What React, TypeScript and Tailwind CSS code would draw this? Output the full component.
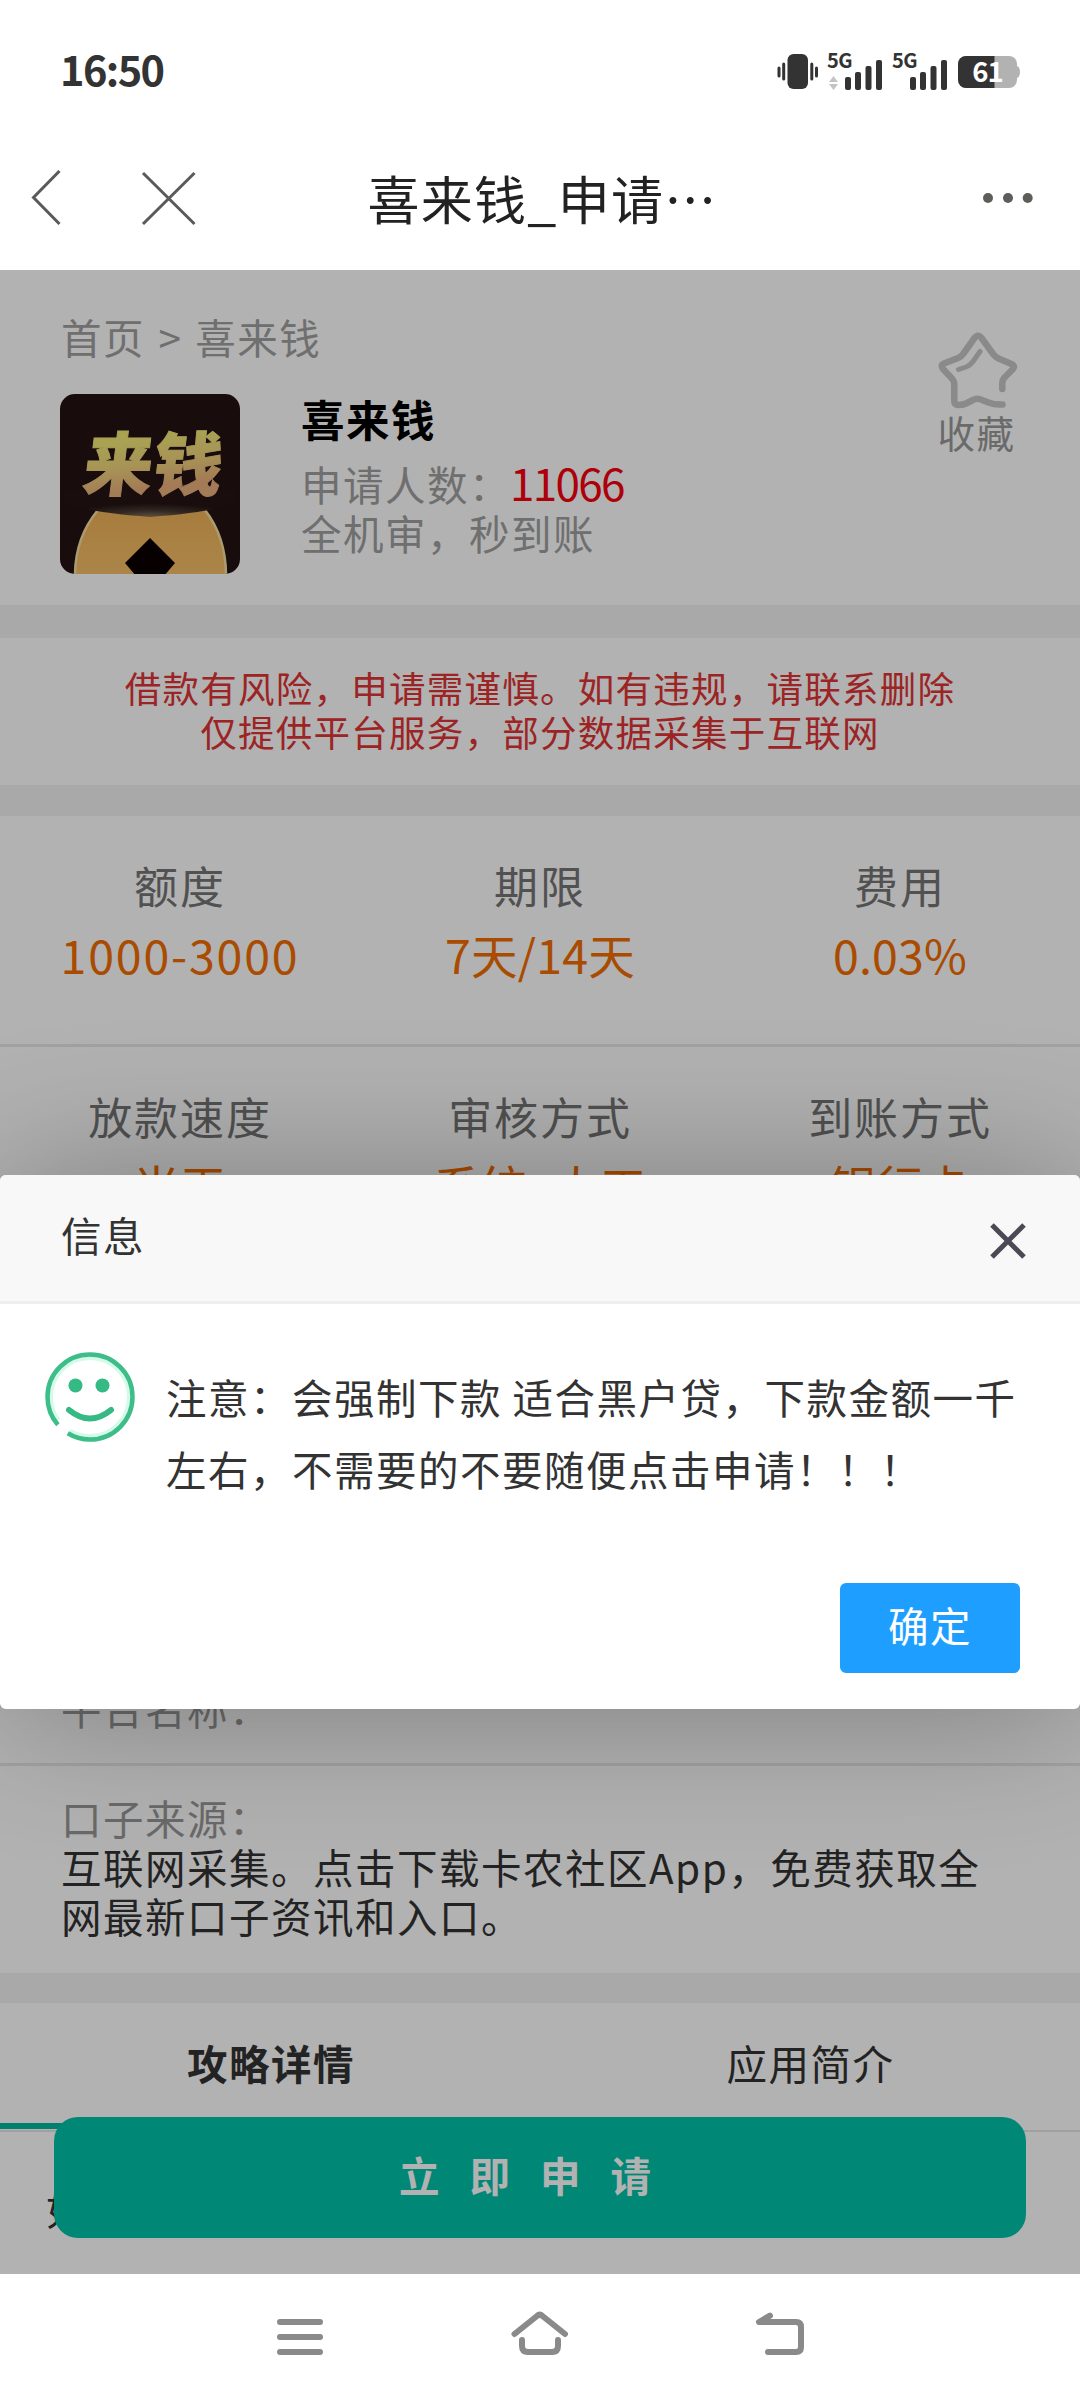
import { ReactNode } from "react";

type Stat = {
  label: string;
  value: string;
};

const LIMIT_STATS: Stat[] = [
  { label: "额度", value: "1000-3000" },
  { label: "期限", value: "7天/14天" },
  { label: "费用", value: "0.03%" },
];

const SPEED_STATS: Stat[] = [
  { label: "放款速度", value: "当天" },
  { label: "审核方式", value: "系统+人工" },
  { label: "到账方式", value: "银行卡" },
];

export default function App() {
  return (
    <div className="flex h-[2400px] w-[1080px] flex-col overflow-hidden bg-white font-['Noto_Sans_CJK_SC',sans-serif] text-[40.5px] tracking-[1.5px] text-[#333]">
      <StatusBar />
      <TitleBar />
      <main className="relative h-[2004px] overflow-hidden bg-white">
        <ProductHeader />
        <Gap className="h-[33px]" />
        <div className="flex h-[147px] flex-col items-center pt-[28px] text-center text-[36.5px] leading-[44px] tracking-[1.25px] text-[#e03434]">
          <p>借款有风险，申请需谨慎。如有违规，请联系删除</p>
          <p>仅提供平台服务，部分数据采集于互联网</p>
        </div>
        <Gap className="h-[31px]" />
        <StatRow stats={LIMIT_STATS} />
        <div className="h-[3px] bg-[#e8e8e8]" />
        <StatRow stats={SPEED_STATS} />
        <Gap className="h-[31px]" />
        <SourceInfo />
        <Gap className="h-[30px]" />
        <Tabs />
        <p className="pl-[46px] pt-[49px] leading-[54px]">如</p>
        <button className="absolute bottom-[36px] left-[54px] flex h-[121px] w-[972px] items-center justify-center rounded-[24px] bg-[#00c2aa] pb-[5px] font-bold tracking-[30px] text-white">
          立即申请
        </button>
        {/* mask */}
        <div className="absolute inset-0 bg-black/30" />
        <Dialog />
      </main>
      <NavBar />
    </div>
  );
}

const Gap = ({ className }: { className: string }) => (
  <div className={`bg-[#f2f2f2] ${className}`} />
);

const SignalBars = () => (
  <svg width="37" height="30" viewBox="0 0 37 30" fill="#333">
    <rect x="0" y="17" width="6" height="13" rx="2" />
    <rect x="10" y="12" width="6" height="18" rx="2" />
    <rect x="20.500" y="6" width="6" height="24" rx="2" />
    <rect x="31" y="0" width="6" height="30" rx="2" />
  </svg>
);

const StatusBar = () => (
  <header className="flex h-[126px] items-start justify-between pl-[60px] pr-[60px] pt-[51px]">
    <span className="text-[41.5px] font-bold leading-[35px] tracking-[-1.6px]">
      16:50
    </span>
    <div className="flex items-start">
      {/* vibrate */}
      <svg width="42" height="36" viewBox="0 0 42 36" className="mt-[3px]">
        <rect x="11.500" y="0" width="20.500" height="35" rx="6" fill="#333" />
        <path
          d="M3 14v8M7.700 10v15M35.800 10v15M40.500 14v8"
          stroke="#333"
          strokeWidth="3"
          strokeLinecap="round"
        />
      </svg>
      <Signal>
        <svg width="9" height="14" viewBox="0 0 9 14" fill="#c4c4c4">
          <path d="M4.500 0L9 6H0zM4.500 14L0 8h9z" />
        </svg>
      </Signal>
      <Signal />
      <svg width="62" height="32" viewBox="0 0 62 32" className="ml-[10px] mt-[5px] overflow-visible">
        <path d="M59 10q3 1 3 6t-3 6z" fill="#b2b2b2" />
        <rect width="59" height="32" rx="8" fill="#b2b2b2" />
        <path d="M8 0h28.500v32H8a8 8 0 0 1-8-8V8a8 8 0 0 1 8-8z" fill="#333" />
        <text
          x="29.500"
          y="26"
          textAnchor="middle"
          fontSize="27.500"
          fontWeight="bold"
          letterSpacing="-1"
          fill="#fff"
        >
          61
        </text>
      </svg>
    </div>
  </header>
);

const Signal = ({ children }: { children?: ReactNode }) => (
  <div className="relative ml-[10px] h-[42px] w-[55px]">
    <span className="ml-[-1px] block text-[20px] font-bold leading-[17px] tracking-[-0.5px]">
      5G
    </span>
    <div className="absolute left-[1px] top-[25px]">{children}</div>
    <div className="absolute left-[17px] top-[9px]">
      <SignalBars />
    </div>
  </div>
);

const TitleBar = () => (
  <div className="flex h-[144px] items-start justify-between pl-[31px] pr-[47px]">
    <div className="flex pt-[44px]">
      <svg width="170" height="56" viewBox="0 0 170 56" fill="none" stroke="#5a5a5a" strokeWidth="3">
        <path d="M28.500 1L2.500 27.500L28.500 54" />
        <path d="M112 3L163.500 54M163.500 3L112 54" />
      </svg>
    </div>
    <h1 className="mr-[99px] mt-[36px] text-[52px] leading-[72px] tracking-[1.3px] text-[#222]">
      喜来钱_申请…
    </h1>
    <svg width="50" height="12" viewBox="0 0 50 12" fill="#5d5d5a" className="mt-[66px]">
      <circle cx="5" cy="6" r="5" />
      <circle cx="25" cy="6" r="5" />
      <circle cx="44.700" cy="6" r="5" />
    </svg>
  </div>
);

const ProductHeader = () => (
  <section className="flex h-[335px] justify-between pl-[60px] pr-[60px]">
    <div>
      <div className="pl-px pt-[37px] leading-[60px] text-[#a0a0a0]">
        首页 <span className="ml-[3px] mr-[2px]">&gt;</span> 喜来钱
      </div>
      <div className="mt-[27px] flex">
        <Logo />
        <div className="ml-[61px] leading-[49px] text-[#a0a0a0]">
          <h2 className="mb-[15px] text-[43.5px] font-bold text-black">喜来钱</h2>
          <p>
            申请人数：
            <span className="ml-[-1px] text-[44px] tracking-[-1.7px] text-[#f8000c]">11066</span>
          </p>
          <p>全机审，秒到账</p>
        </div>
      </div>
    </div>
    <div className="flex w-[84px] flex-col items-center pt-[60px] text-[37.5px] leading-[40px] text-[#999]">
      <svg
        width="84"
        height="82"
        viewBox="1 0 84 82"
        fill="none"
        stroke="#c6c6c6"
        strokeWidth="6.500"
        strokeLinecap="round"
        strokeLinejoin="round"
      >
        <path d="M67.300 59V53Q67.300 50 69.500 47.500L78 39Q80.500 36 76.500 34L63.500 28.500Q60.500 27 58.500 24.500L46.500 8Q43 3.500 39.500 8L28.500 23.500Q26.500 26.500 23 28L9 33.500Q5 35.500 8 39L17 48.500Q19.300 51 19.300 54V71Q19.300 75 23.500 75Q28 75 31 73.500L38 70Q42.300 67.500 47 70L53.500 72.500Q60 75 67.500 74.500" />
        <path d="M23.500 39.500L31 37Q35.500 35 38 31.500L45 21.500" strokeWidth="5" />
      </svg>
      <span className="mr-[3px] whitespace-nowrap">收藏</span>
    </div>
  </section>
);

const Logo = () => (
  <svg width="180" height="180" viewBox="0 0 180 180" className="rounded-[15px]">
    <defs>
      <linearGradient id="gold" x1="0" y1="0" x2="0.200" y2="1">
        <stop offset="0.350" stopColor="#f2e878" />
        <stop offset="0.600" stopColor="#f0d47c" />
        <stop offset="0.850" stopColor="#eab07c" />
      </linearGradient>
      <linearGradient id="coin" x1="0" y1="0" x2="0" y2="1">
        <stop offset="0" stopColor="#f0b35a" />
        <stop offset="1" stopColor="#f5c068" />
      </linearGradient>
      <radialGradient id="brim" cx="0.500" cy="1" r="0.500">
        <stop offset="0" stopColor="#8a7458" />
        <stop offset="0.500" stopColor="#463830" />
        <stop offset="1" stopColor="#241414" />
      </radialGradient>
    </defs>
    <rect width="180" height="180" fill="#241212" />
    <path
      d="M15 182C15 156 23 134 38 116H145C159 134 166 156 166 182z"
      fill="url(#coin)"
      stroke="#f5e0a0"
      strokeWidth="2.500"
    />
    <path d="M4 108Q24 118 90 123Q156 118 176 108V96H4z" fill="url(#brim)" />
    <path d="M90 144L115 169L104 182H76L65 169z" fill="#0a0200" />
    <text
      x="33"
      y="96"
      fontSize="69"
      fontWeight="900"
      fill="url(#gold)"
      stroke="url(#gold)"
      strokeWidth="1"
      letterSpacing="0.500"
      transform="skewX(-7)"
    >
      来钱
    </text>
  </svg>
);

const StatRow = ({ stats }: { stats: Stat[] }) => (
  <div className="grid h-[228px] grid-cols-3 pt-[39px] text-center">
    {stats.map(({ label, value }) => (
      <div key={label}>
        <p className="text-[44px] leading-[60px] tracking-[1.9px] text-[#757575]">{label}</p>
        <p
          className={`mt-[9px] text-[46.5px] leading-[60px] text-[#f26c00] ${
            label === "额度" ? "tracking-[1.8px]" : "tracking-[0.2px]"
          }`}
        >
          {value}
        </p>
      </div>
    ))}
  </div>
);

const SourceInfo = () => (
  <section>
    <div className="h-[457px] pt-[372px] leading-[60px] text-[#999]">
      <p className="pl-[61px]">平台名称：</p>
    </div>
    <div className="h-[3px] bg-[#e8e8e8]" />
    <div className="h-[207px] pl-[61px] pr-[60px] pt-[27px] leading-[49px]">
      <p className="text-[#999]">口子来源：</p>
      <p>
        互联网采集。点击下载卡农社区App，免费获取全网最新口子资讯和入口。
      </p>
    </div>
  </section>
);

const Tabs = () => (
  <div className="grid h-[129px] grid-cols-2 border-b-2 border-[#e6e6e6] text-center leading-[120px]">
    <div className="h-[126px] border-b-[6px] border-[#00b89f] pl-[2px] font-bold">攻略详情</div>
    <div className="pl-px">应用简介</div>
  </div>
);

const Dialog = () => (
  <div className="absolute left-0 top-[905px] h-[534px] w-full rounded-[6px] bg-white shadow-[3px_3px_150px_rgba(0,0,0,0.3)]">
    <div className="flex h-[129px] items-start justify-between rounded-t-[6px] border-b-[3px] border-[#eee] bg-[#f8f8f8] pl-[61px] pr-[51px]">
      <span className="leading-[119px]">信息</span>
      <svg
        width="42"
        height="42"
        viewBox="0 0 42 42"
        stroke="#4a4956"
        strokeWidth="5"
        className="mt-[45px]"
      >
        <path d="M5 5L37 37M37 5L5 37" />
      </svg>
    </div>
    <div className="flex h-[279px] pl-[45px] pt-[48px]">
      <Smiley />
      <p className="ml-[31px] w-[872px] pt-[9px] leading-[72px]">
        注意：会强制下款 适合黑户贷，下款金额一千左右，不需要的不要随便点击申请！！！
      </p>
    </div>
    <div className="flex justify-end pr-[60px]">
      <button className="h-[90px] w-[180px] rounded-[6px] bg-[#1e9fff] pb-[6px] leading-[84px] text-white">
        确定
      </button>
    </div>
  </div>
);

const Smiley = () => (
  <svg width="90" height="90" viewBox="0 0 90 90" fill="none">
    <circle
      cx="45"
      cy="45"
      r="40"
      stroke="#d4faea"
      strokeWidth="6"
      strokeDasharray="84 16 152"
    />
    {/* open ring, the gap is at the bottom left */}
    <circle
      cx="45"
      cy="45"
      r="42.500"
      stroke="#3dbd88"
      strokeWidth="4.500"
      strokeDasharray="90 13 170"
    />
    <circle cx="30.500" cy="33.500" r="7" fill="#35b985" />
    <circle cx="57.500" cy="33.500" r="7" fill="#35b985" />
    <path d="M24 58Q45 75 66 58" stroke="#35b985" strokeWidth="6" strokeLinecap="round" />
  </svg>
);

const NavBar = () => (
  <nav className="flex h-[126px] items-start pl-[274px] pt-[35px]">
    <svg
      width="534"
      height="50"
      viewBox="274 2309 534 50"
      fill="none"
      stroke="#8a8a8a"
      strokeWidth="6"
      strokeLinecap="round"
      strokeLinejoin="round"
    >
      <path d="M280 2322H320M280 2337H320M280 2352H320" />
      <path d="M514.500 2334L537 2316Q539.700 2313.500 542.500 2316L565 2334" />
      <path d="M522 2340V2346Q522 2352 528 2352H552Q558 2352 558 2346V2340" />
      <path d="M770 2315.700L759 2322H796Q801 2322 801 2327V2347Q801 2352 796 2352H768" />
    </svg>
  </nav>
);
